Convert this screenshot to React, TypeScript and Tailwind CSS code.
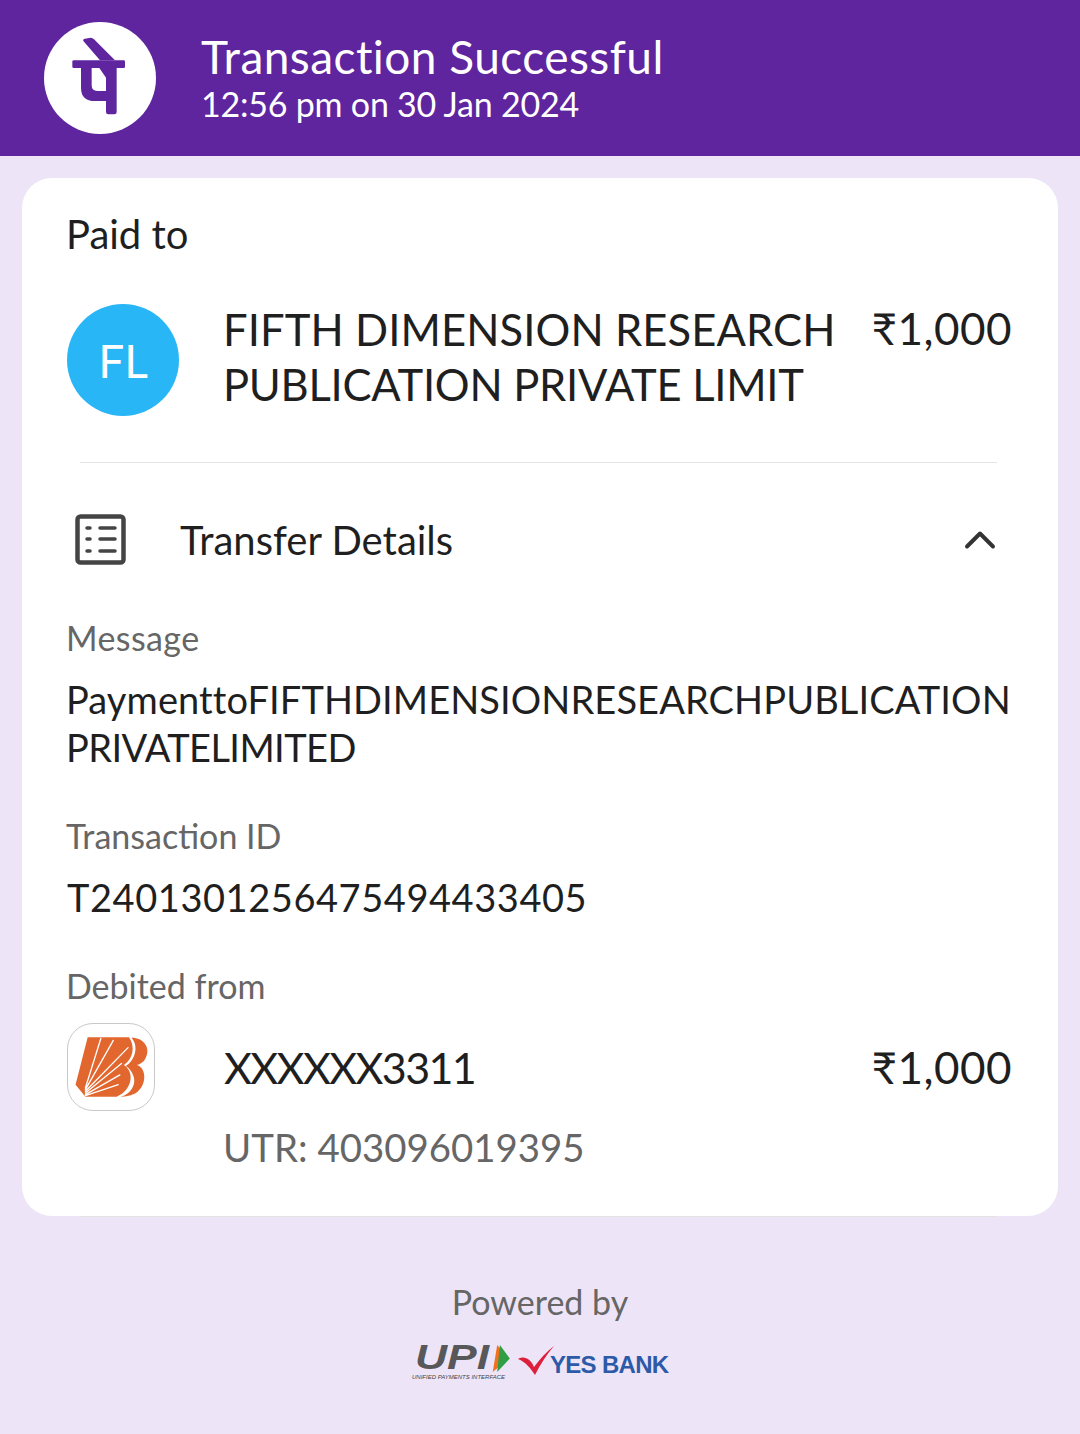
import { ChevronUp } from "lucide-react";

function PhonePeLogo() {
  return (
    <div className="flex h-[112px] w-[112px] items-center justify-center rounded-full bg-white">
      <svg width="112" height="112" viewBox="132 65 336 336" fill="#5f259f">
        <rect x="217" y="180" width="158" height="23" rx="4" />
        <path d="M250 122 Q248 116 255 115 L272 112 Q278 112 282 117 L345 180 L300 180 Z" />
        <path d="M243 203 L275 203 L275 255 Q275 272 292 272 L318 272 L318 302 L285 302 Q243 302 243 262 Z" />
        <path d="M318 203 L350 203 L350 335 Q350 342 343 342 L325 342 Q318 342 318 335 Z" />
        <path d="M298 203 L318 203 L318 232 Z" />
      </svg>
    </div>
  );
}

function DetailsIcon() {
  return (
    <svg width="52" height="52" viewBox="0 0 52 52" fill="none" stroke="#444444" strokeLinecap="round">
      <rect x="2.500" y="2.500" width="46" height="46" rx="3" strokeWidth="4.500" />
      <path d="M12 14 h3 M12 25 h3 M12 37 h3" strokeWidth="3.500" />
      <path d="M25 14 h15 M25 25 h15 M25 37 h15" strokeWidth="3.500" />
    </svg>
  );
}

function BankLogo() {
  return (
    <div className="flex h-[88px] w-[88px] items-center justify-center rounded-[26px] border border-[#c9c9c9] bg-white">
      <svg width="86" height="86" viewBox="52 40 262 262" fill="#e2672f">
        <path d="M112 80 L238 80 C258 110 250 145 222 165 C255 185 250 240 200 262 L105 262 L75 225 Z" />
        <path d="M245 82 C285 82 305 115 288 145 C282 156 272 162 262 165 C292 175 292 225 262 248 C248 258 225 262 212 262 C245 252 262 222 250 195 C245 182 235 172 228 168 C258 150 268 105 245 82 Z" />
        <g stroke="#ffffff" strokeWidth="4" strokeLinecap="round">
          <path d="M105 235 L152 84 M105 240 L190 90 M105 245 L235 112 M105 250 L215 160 M105 255 L210 195 M105 258 L205 225" />
        </g>
      </svg>
    </div>
  );
}

function PartnerLogos() {
  return (
    <div className="flex h-[40px] items-start pl-[412px]">
      <div className="flex w-[100px] flex-col items-start">
        <div className="flex h-[27px] items-center pl-[3px]">
          <div className="w-[72px]">
            <span className="inline-block origin-left scale-x-[1.27] font-['Liberation_Sans',sans-serif] text-[35px] leading-[27px] font-bold text-[#58585a] italic">
              UPI
            </span>
          </div>
          <svg width="24" height="27" viewBox="0 0 24 30">
            <path d="M10 0 L23 15 L5 30 Z" fill="#f37021" />
            <path d="M13 0 L24 15 L10 30 Z" fill="#2f9e44" />
          </svg>
        </div>
        <span className="mt-[1px] font-['Liberation_Sans',sans-serif] text-[6px] leading-[8px] font-medium text-[#444444] italic">
          UNIFIED PAYMENTS INTERFACE
        </span>
      </div>
      <svg width="36" height="30" viewBox="0 0 36 30" className="ml-[6px]">
        <path d="M0 14 C6 10 13 14 16 22 C22 14 28 7 36 1 C28 10 22 20 17 30 C13 24 8 17 0 14 Z" fill="#dc1f3c" />
      </svg>
      <span className="ml-[-4px] mt-[6px] font-['Liberation_Sans',sans-serif] text-[24px] leading-[28px] font-bold tracking-[-0.7px] text-[#2c5aa8]">
        YES BANK
      </span>
    </div>
  );
}

export default function App() {
  return (
    <div className="flex min-h-[1434px] w-[1080px] flex-col bg-[#ede5f7] font-['Lato',sans-serif] text-[#1f1f1f]">
      <div className="flex h-[156px] items-center bg-[#5f259f] pl-[44px]">
        <PhonePeLogo />
        <div className="ml-[45px] text-white">
          <div className="text-[46px] leading-[52px] tracking-[0.45px]">Transaction Successful</div>
          <div className="text-[34px] leading-[42px] tracking-[-0.22px]">12:56 pm on 30 Jan 2024</div>
        </div>
      </div>

      <div className="mx-[22px] mt-[22px] h-[1038px] rounded-[30px] bg-white">
        <div className="pl-[44px] pt-[34px] text-[40px] leading-[44px]">Paid to</div>

        <div className="mt-[48px] flex items-center pl-[45px] pr-[46px]">
          <div className="flex h-[112px] w-[112px] items-center justify-center rounded-full bg-[#29b6f6] text-[46px] text-white">
            FL
          </div>
          <div className="mt-[-7px] ml-[44px] w-[640px] text-[43.500px] leading-[55px]">
            <div className="tracking-[0.1px]">FIFTH DIMENSION RESEARCH</div>
            <div className="tracking-[-0.25px]">PUBLICATION PRIVATE LIMIT</div>
          </div>
          <div className="mt-[-3px] ml-auto self-start text-[44px] leading-[55px] tracking-[0.5px]">₹1,000</div>
        </div>

        <div className="ml-[58px] mr-[61px] mt-[46px] h-px bg-[#e3e3e3]" />

        <div className="mt-[51px] flex h-[52px] items-center pl-[53px] pr-[52px]">
          <DetailsIcon />
          <span className="ml-[53px] text-[40px]">Transfer Details</span>
          <ChevronUp size={52} strokeWidth={1.800} color="#333333" className="ml-auto" />
        </div>

        <div className="mt-[50px] pl-[44px] text-[34px] leading-[44px] tracking-[0.4px] text-[#666666]">Message</div>
        <div className="mt-[15px] pl-[44px] text-[38px] leading-[48px]">
          <div className="tracking-[0.1px]">PaymenttoFIFTHDIMENSIONRESEARCHPUBLICATION</div>
          <div className="tracking-[-0.57px]">PRIVATELIMITED</div>
        </div>

        <div className="mt-[43px] pl-[44px] text-[34px] leading-[44px] text-[#666666]">Transaction ID</div>
        <div className="mt-[15px] pl-[45px] text-[38px] leading-[48px] tracking-[0.56px]">T2401301256475494433405</div>

        <div className="mt-[43px] pl-[44px] text-[34px] leading-[44px] text-[#666666]">Debited from</div>

        <div className="mt-[15px] flex pl-[45px] pr-[46px]">
          <BankLogo />
          <div className="ml-[69px] mt-[17px] text-[43px] leading-[55px] tracking-[-1.6px]">XXXXXX3311</div>
          <div className="ml-auto mt-[17px] text-[44px] leading-[55px] tracking-[0.5px]">₹1,000</div>
        </div>
        <div className="mt-[12px] pl-[201px] text-[38.400px] leading-[48px] text-[#666666]">UTR: 403096019395</div>
      </div>
      <div className="ml-[80px] mr-[83px] h-px bg-[#e3e3e3]" />

      <div className="mt-[63px] text-center text-[34px] leading-[44px] text-[#666666]">Powered by</div>
      <div className="mt-[21px]">
        <PartnerLogos />
      </div>
    </div>
  );
}
